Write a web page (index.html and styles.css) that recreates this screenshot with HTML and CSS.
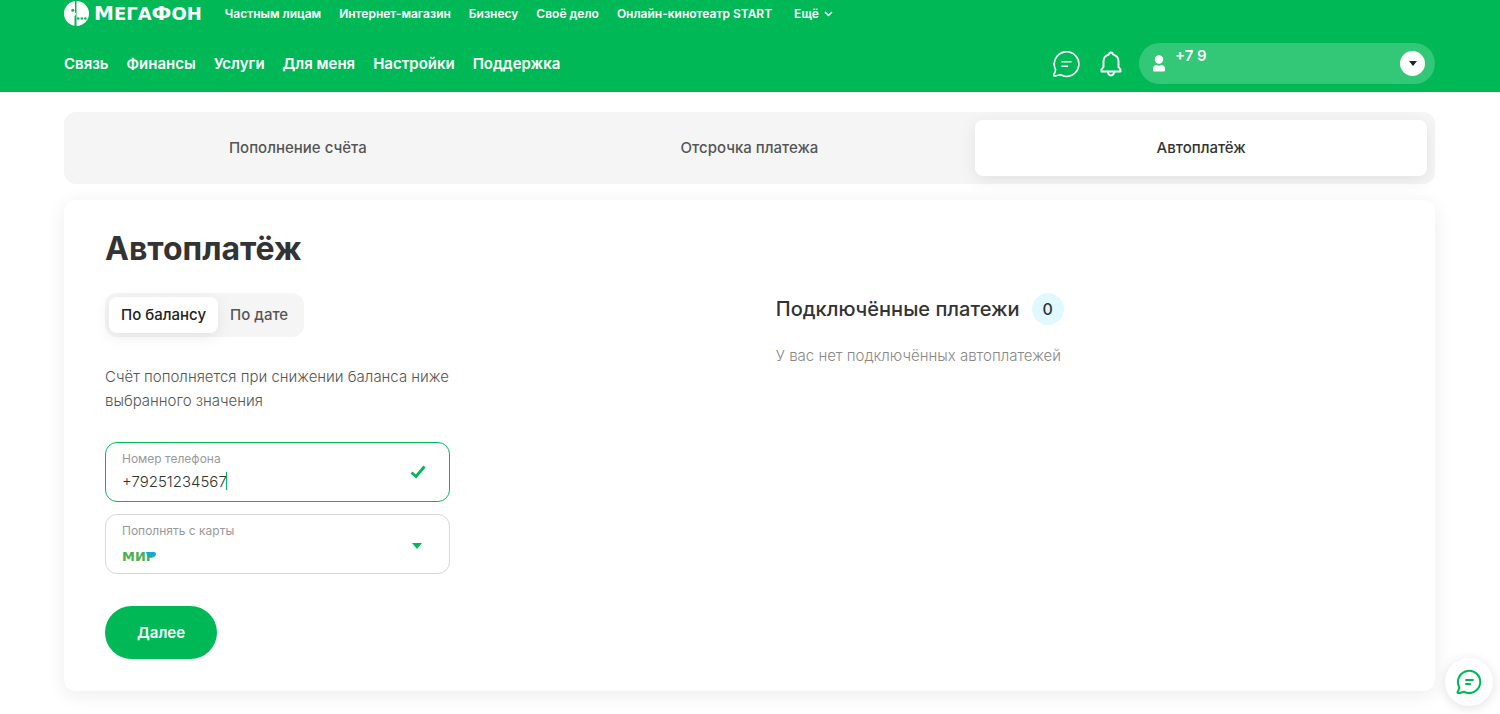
FILE: index.html
```html
<!DOCTYPE html>
<html lang="ru">
<head>
<meta charset="utf-8">
<title>Автоплатёж</title>
<meta name="viewport" content="width=device-width, initial-scale=1">
<link rel="stylesheet" href="styles.css">
</head>
<body>
<header class="header">
  <div class="header-top">
    <a class="logo" href="#">
      <svg class="logo-mark" viewBox="0 0 25 25" aria-hidden="true">
        <circle cx="12.500" cy="12.500" r="12.500" fill="#fff"/>
        <path d="M11 0h1.500v12H11zM10.500 15.500Q12 14.500 12 12h0.500v13H10.500z" fill="#00b956"/>
        <circle cx="8.800" cy="9.300" r="1.500" fill="#00b956"/>
        <circle cx="14.200" cy="17.500" r="1.300" fill="#00b956"/>
        <circle cx="17.800" cy="17.500" r="1.300" fill="#00b956"/>
        <circle cx="21.400" cy="17.500" r="1.300" fill="#00b956"/>
      </svg>
      <span class="logo-text">М<span class="logo-small">ЕГА</span>Ф<span class="logo-small">ОН</span></span>
    </a>
    <nav class="nav-top" aria-label="Разделы сайта">
      <a href="#">Частным лицам</a>
      <a href="#">Интернет-магазин</a>
      <a href="#">Бизнесу</a>
      <a href="#">Своё дело</a>
      <a href="#">Онлайн-кинотеатр START</a>
      <button class="more" type="button">Ещё
        <svg class="chevron" viewBox="0 0 9 6" aria-hidden="true"><path d="M1 1l3.500 3.500L8 1" fill="none" stroke="#fff" stroke-width="1.500"/></svg>
      </button>
    </nav>
  </div>
  <div class="header-main">
    <nav class="nav-main" aria-label="Личный кабинет">
      <a href="#">Связь</a>
      <a href="#">Финансы</a>
      <a href="#">Услуги</a>
      <a href="#">Для меня</a>
      <a href="#">Настройки</a>
      <a href="#">Поддержка</a>
    </nav>
    <div class="header-tools">
      <button class="icon-button" type="button" aria-label="Чат">
        <svg class="icon-chat" viewBox="0 0 28 28" fill="none" stroke="#fff" stroke-width="1.600" stroke-linejoin="round" stroke-linecap="round" aria-hidden="true"><path d="M3.500 19.500A12.300 12.300 0 1 1 8.500 24.800C6.500 25 4 26.300 1.800 25.800C0.800 24.500 4 22.500 3.500 19.500Z"/><path d="M10 11.800h9M10 16.200h5.500"/></svg>
      </button>
      <button class="icon-button" type="button" aria-label="Уведомления">
        <svg class="icon-bell" viewBox="0 0 22 26" fill="none" stroke="#fff" stroke-width="1.900" stroke-linejoin="round" aria-hidden="true"><path d="M1.500 20.500V18.500L3.500 16V10C3.500 6.500 6 4.200 9.200 3.300V2.500Q11 0.500 12.800 2.500V3.300C16 4.200 18.500 6.500 18.500 10V16L20.500 18.500V20.500Z"/><path d="M8 21a3 3.500 0 0 0 6 0"/></svg>
      </button>
      <button class="account" type="button" aria-label="Выбор номера">
        <svg class="icon-user" viewBox="0 0 12 17" fill="#fff" aria-hidden="true"><circle cx="6" cy="4.500" r="4.200"/><path d="M0 13.500C0 11 2 10 3.500 10C5 11 7 11 8.500 10C10 10 12 11 12 13.500V15.500Q12 16.500 11 16.500H1Q0 16.500 0 15.500Z"/></svg>
        <span class="account-number">+7 9</span>
        <span class="account-toggle"><svg class="arrow-small" viewBox="0 0 8 5" aria-hidden="true"><path d="M0 0h8L4 5z" fill="#222"/></svg></span>
      </button>
    </div>
  </div>
</header>

<main class="page">
  <nav class="tabs" aria-label="Оплата">
    <a class="tab" href="#">Пополнение счёта</a>
    <a class="tab" href="#">Отсрочка платежа</a>
    <a class="tab tab-active" href="#" aria-current="page">Автоплатёж</a>
  </nav>

  <section class="card">
    <h1 class="title">Автоплатёж</h1>
    <div class="columns">
      <form class="form">
        <div class="switch">
          <button class="switch-item switch-active" type="button">По балансу</button>
          <button class="switch-item" type="button">По дате</button>
        </div>
        <p class="hint">Счёт пополняется при снижении баланса ниже выбранного значения</p>
        <div class="field field-valid">
          <div class="field-body">
            <label class="label" for="phone">Номер телефона</label>
            <div class="input-line">
              <input class="input" id="phone" type="tel" value="+79251234567">
              <span class="caret"></span>
            </div>
          </div>
          <svg class="icon-check" viewBox="0 0 16 14" aria-hidden="true"><path d="M1.500 7.500l4.500 4L14.500 1.500" fill="none" stroke="#00b956" stroke-width="2.800"/></svg>
        </div>
        <div class="field">
          <div class="field-body">
            <label class="label" for="card">Пополнять с карты</label>
            <div class="input-line">
              <select class="select" id="card"><option>МИР</option></select>
              <svg class="brand-accent" viewBox="0 0 10 5" aria-hidden="true"><path d="M0 0H8Q10 0 10 2Q9.800 4.500 7.500 4.500H4Q1 4.500 0 0Z" fill="#0fa8e0"/></svg>
            </div>
          </div>
          <svg class="icon-arrow" viewBox="0 0 10 6" aria-hidden="true"><path d="M0 0h10L5 6z" fill="#00b956"/></svg>
        </div>
        <button class="submit" type="submit">Далее</button>
      </form>
      <div class="connected">
        <h2 class="subtitle">Подключённые платежи <span class="count">0</span></h2>
        <p class="empty">У вас нет подключённых автоплатежей</p>
      </div>
    </div>
  </section>
</main>

<button class="chat-fab" type="button" aria-label="Открыть чат">
  <svg class="icon-fab" viewBox="0 0 28 28" fill="none" stroke="#00b956" stroke-width="2.200" stroke-linejoin="round" aria-hidden="true"><path d="M3.500 19.500A12 12 0 1 1 8.500 24.500C6.500 25 4 26.300 1.800 25.800C0.800 24.500 4 22.500 3.500 19.500Z"/><path d="M10 11.800h9M10 16.200h6"/></svg>
</button>
</body>
</html>
```
FILE: styles.css
```css
* {
  box-sizing: border-box;
}

body {
  margin: 0;
  background: #fff;
  color: #333;
  font-family: Inter, Roboto, sans-serif;
  font-size: 15px;
}

a {
  color: inherit;
  text-decoration: none;
}

button,
input,
select {
  padding: 0;
  border: 0;
  background: none;
  color: inherit;
  font: inherit;
}

button {
  cursor: pointer;
}

svg {
  display: block;
  flex: none;
}

.header {
  padding: 0 65px 8px 64px;
  background: #00b956;
  color: #fff;
}

.header-top {
  display: flex;
  align-items: center;
  gap: 23px;
  height: 27px;
}

.logo {
  display: flex;
  align-items: center;
  gap: 5px;
}

.logo-mark {
  width: 25px;
  height: 25px;
}

.logo-text {
  font: bold 20px/25px "DejaVu Sans", sans-serif;
}

.logo-small {
  font-size: 18px;
}

.nav-top {
  display: flex;
  align-items: center;
  gap: 18px;
  font-size: 12px;
  font-weight: 600;
  line-height: 16px;
}

.more {
  display: flex;
  align-items: center;
  gap: 5px;
  margin-left: 4px;
}

.chevron {
  width: 9px;
  height: 6px;
}

.header-main {
  display: flex;
  align-items: center;
  justify-content: space-between;
  padding-top: 16px;
}

.nav-main {
  display: flex;
  gap: 18px;
  font-weight: 600;
  line-height: 24px;
}

.header-tools {
  display: flex;
  align-items: center;
  gap: 20px;
}

.icon-chat {
  width: 28px;
  height: 28px;
}

.icon-bell {
  width: 22px;
  height: 26px;
}

.account {
  display: flex;
  align-items: center;
  gap: 10px;
  width: 296px;
  height: 41px;
  margin-left: -3px;
  padding: 0 10px 0 14px;
  border-radius: 21px;
  background: #33c778;
}

.icon-user {
  width: 12px;
  height: 17px;
}

.account-number {
  flex: 1;
  align-self: flex-start;
  padding-top: 3px;
  font-weight: 600;
  line-height: 20px;
  text-align: left;
}

.account-toggle {
  display: grid;
  place-items: center;
  width: 25px;
  height: 25px;
  border-radius: 50%;
  background: #fff;
}

.arrow-small {
  width: 8px;
  height: 5px;
}

.page {
  display: grid;
  gap: 16px;
  padding: 20px 65px 23px 64px;
}

.tabs {
  display: grid;
  grid-template-columns: repeat(3, 1fr);
  padding: 8px;
  border-radius: 12px;
  background: #f5f5f5;
}

.tab {
  border-radius: 8px;
  color: #555;
  font-weight: 500;
  line-height: 56px;
  text-align: center;
}

.tab-active {
  background: #fff;
  color: #333;
  box-shadow: 0 4px 16px rgba(0, 0, 0, 0.08);
}

.card {
  padding: 29px 40px 32px 41px;
  border-radius: 12px;
  background: #fff;
  box-shadow: 0 4px 20px rgba(0, 0, 0, 0.08);
}

.title {
  margin: 0 0 24px;
  font-size: 32px;
  font-weight: 700;
  line-height: 40px;
}

.columns {
  display: grid;
  grid-template-columns: 52% 1fr;
}

.form {
  display: flex;
  flex-direction: column;
  align-items: flex-start;
}

.switch {
  display: flex;
  padding: 4px;
  border-radius: 12px;
  background: #f5f5f5;
}

.switch-item {
  padding: 0 12px;
  border-radius: 8px;
  color: #555;
  font-weight: 500;
  line-height: 36px;
}

.switch-active {
  background: #fff;
  color: #222;
  box-shadow: 0 4px 16px rgba(0, 0, 0, 0.08);
}

.hint {
  max-width: 360px;
  margin: 28px 0 29px;
  color: #555;
  font-weight: 300;
  line-height: 24px;
}

.field {
  display: flex;
  align-items: center;
  justify-content: space-between;
  width: 100%;
  max-width: 345px;
  height: 60px;
  margin-bottom: 12px;
  padding: 0 23px 0 16px;
  border: 1px solid #d8d8d8;
  border-radius: 12px;
}

.field-valid {
  border-color: #00b956;
}

.field-body {
  display: grid;
  gap: 2px;
}

.label {
  color: #999;
  font-size: 12px;
  line-height: 16px;
}

.input-line {
  position: relative;
  height: 24px;
}

.input {
  width: 240px;
  height: 24px;
  outline: none;
  font-weight: 300;
  caret-color: #00b956;
}

.caret {
  position: absolute;
  top: 3px;
  left: 104px;
  width: 1px;
  height: 18px;
  background: #00b956;
}

.icon-check {
  width: 16px;
  height: 14px;
}

.select {
  width: 240px;
  height: 32px;
  outline: none;
  appearance: none;
  color: #4caf50;
  font: bold 13px/32px "DejaVu Sans", sans-serif;
}

.brand-accent {
  position: absolute;
  top: 11px;
  left: 24px;
  width: 10px;
  height: 5px;
}

.icon-arrow {
  width: 10px;
  height: 6px;
  margin: 4px 4px 0 0;
}

.submit {
  margin-top: 20px;
  padding: 0 32px;
  border-radius: 27px;
  background: #00b956;
  color: #fff;
  font-weight: 600;
  line-height: 53px;
}

.subtitle {
  display: flex;
  align-items: center;
  gap: 12px;
  margin: 0;
  font-size: 20px;
  font-weight: 500;
  line-height: 32px;
}

.count {
  width: 32px;
  border-radius: 50%;
  background: #e0f8ff;
  font-size: 16px;
  text-align: center;
}

.empty {
  margin: 19px 0 0;
  color: #888;
  font-weight: 300;
  line-height: 24px;
}

.chat-fab {
  position: fixed;
  right: 7px;
  bottom: 8px;
  display: grid;
  place-items: center;
  width: 48px;
  height: 48px;
  border-radius: 50%;
  background: #fff;
  box-shadow: 0 2px 12px rgba(0, 0, 0, 0.12);
}

.icon-fab {
  width: 26px;
  height: 26px;
}
```
